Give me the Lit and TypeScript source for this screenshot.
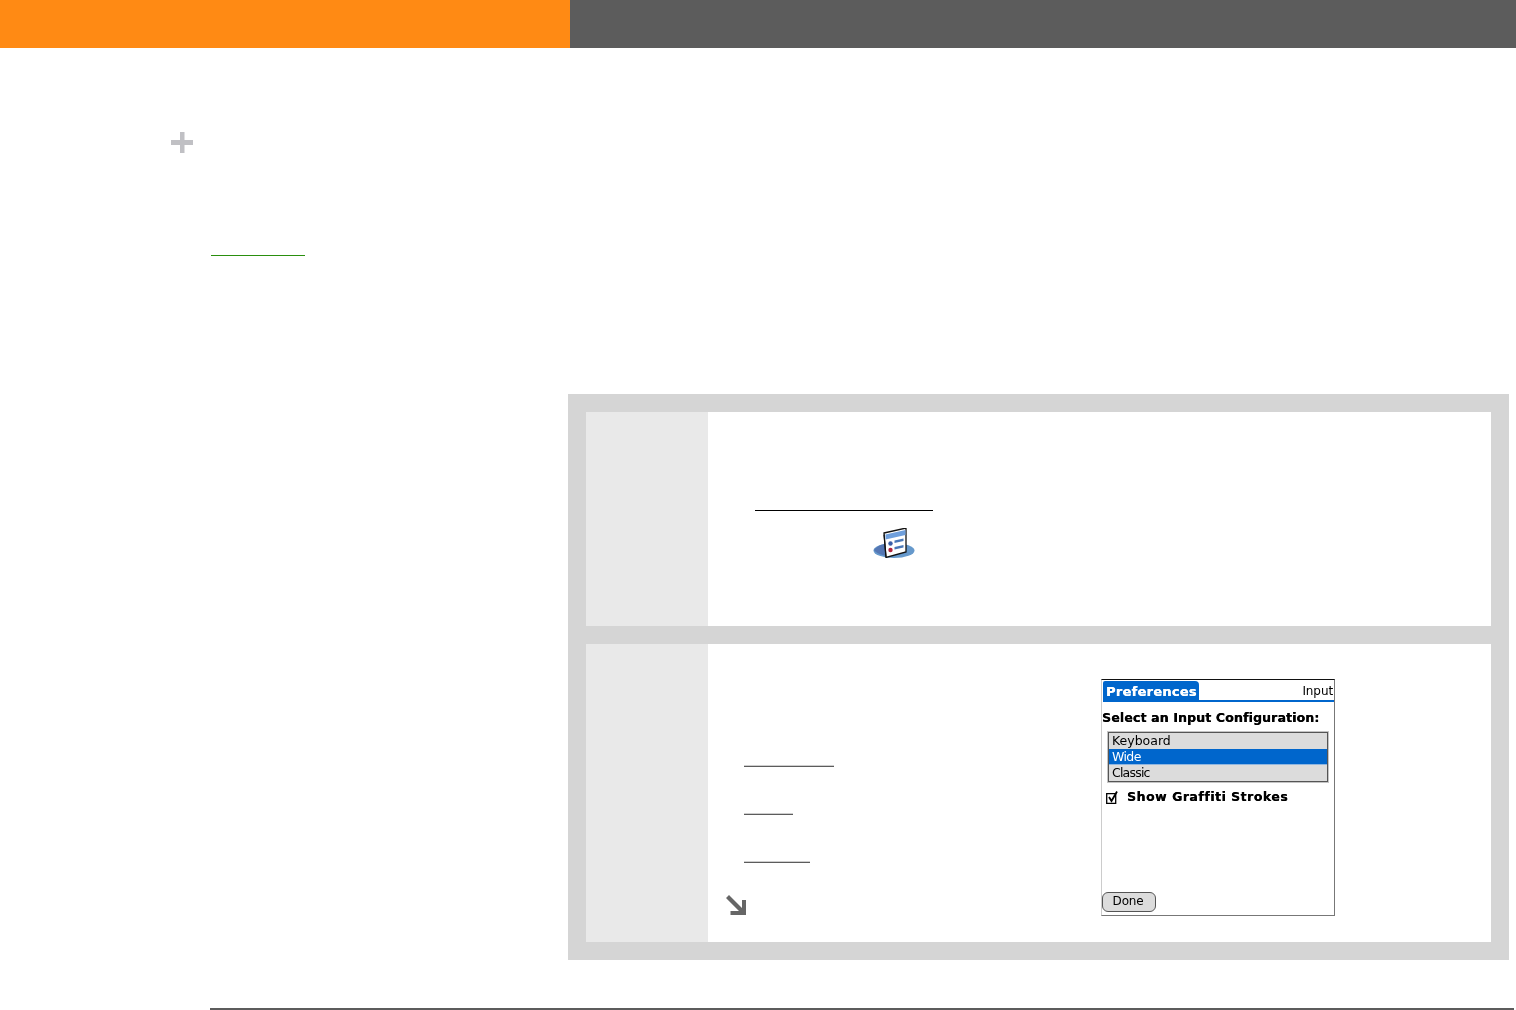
import { LitElement, html, css } from "lit";
import { customElement } from "lit/decorators.js";

@customElement("app-root")
export class AppRoot extends LitElement {
  static styles = css`
    :host { display: block; width: 1516px; height: 1010px; overflow: hidden; background: #fff; font-family: "DejaVu Sans", sans-serif; }
    .header { display: flex; height: 48px; }
    .header-accent { width: 570px; background: #ff8a14; }
    .header-bar { flex: 1; background: #5c5c5c; }
    .plus { display: block; margin: 84px 0 0 171px; }
    .crumb { width: 94px; height: 1px; margin: 102px 0 0 211px; background: #2a8f0e; }
    .panel { display: flex; flex-direction: column; gap: 18px; width: 905px; margin: 138px 0 0 568px; padding: 18px; background: #d5d5d5; }
    .row { display: flex; background: #fff; }
    .step { flex: 0 0 122px; background: #e9e9e9; }
    .first { flex: 1; height: 214px; padding-top: 98px; box-sizing: border-box; }
    .first .link { width: 178px; height: 1px; margin-left: 47px; background: #000; }
    .app-icon { display: block; margin: 17px 0 0 165px; }
    .second { flex: 1; display: flex; height: 298px; }
    .links { flex: 0 0 393px; padding-top: 122px; box-sizing: border-box; }
    .rule { height: 1px; margin-left: 36px; background: #5c5c5c; box-shadow: 0 -1px 0 rgba(92, 92, 92, 0.3); }
    .rule.a { width: 90px; }
    .rule.b { width: 49px; margin-top: 47px; }
    .rule.c { width: 66px; margin-top: 47px; }
    .more { display: block; margin: 32px 0 0 18px; }
    .screen { display: flex; flex-direction: column; box-sizing: border-box; width: 234px; height: 237px; margin-top: 35px; padding: 1px 0 3px 0; border-top: 1px solid #111; border-right: 1px solid #777; border-bottom: 1px solid #777; border-left: 1px solid #ccc; color: #000; font-size: 12.5px; line-height: 16px; filter: blur(0.3px); }
    .titlebar { display: flex; justify-content: space-between; align-items: flex-end; height: 19px; margin-left: 1px; border-bottom: 2px solid #0066cc; flex: none; }
    .tab { width: 96px; height: 19px; box-sizing: border-box; padding-left: 3px; background: #0066cc; color: #fff; font-weight: 700; font-size: 13px; line-height: 22px; letter-spacing: 0.25px; border-radius: 2px 4px 0 0; white-space: nowrap; text-shadow: 0.3px 0 0 currentColor; }
    .tab-right { padding-right: 1px; line-height: 17px; font-size: 12px; letter-spacing: -0.1px; }
    .prompt { margin-top: 8px; font-weight: 700; white-space: nowrap; letter-spacing: 0.15px; text-shadow: 0.3px 0 0 currentColor; }
    .list { margin: 6px 6px 0 6px; border: 1px solid #555; background: #dcdcdc; box-shadow: 0 0 0 1px rgba(85, 85, 85, 0.35); }
    .item { height: 16px; padding-left: 3px; font-size: 12.5px; line-height: 16px; }
    .item.sel { background: #0066cc; color: #fff; border-bottom: 1px solid #8fb6e0; height: 15px; letter-spacing: -0.6px; }
    .item.narrow { letter-spacing: -0.8px; }
    .check { display: flex; align-items: center; gap: 8px; margin: 7px 0 0 4px; font-weight: 700; white-space: nowrap; letter-spacing: 0.5px; text-shadow: 0.3px 0 0 currentColor; }
    .done { margin-top: auto; width: 54px; height: 20px; box-sizing: border-box; padding-right: 2px; border: 1px solid #555; border-radius: 6px; background: #dcdcdc; text-align: center; line-height: 17px; font-size: 12px; letter-spacing: -0.2px; }
    .foot { width: 1304px; height: 2px; margin: 48px 0 0 210px; background: #5c5c5c; }
  `;

  render() {
    return html`
      <div class="header"><div class="header-accent"></div><div class="header-bar"></div></div>
      <svg class="plus" width="22" height="21" viewBox="0 0 22 21"><path fill="#c0c0c4" d="M9 0h4.500v8H22v5h-8.500v8H9v-8H0V8h9z"/></svg>
      <div class="crumb"></div>
      <div class="panel">
        <div class="row">
          <div class="step"></div>
          <div class="first">
            <div class="link"></div>
            <svg class="app-icon" width="42" height="30" viewBox="0 0 42 30">
              <ellipse cx="21" cy="22.500" rx="20.500" ry="7.500" fill="#6699cc"/>
              <path d="M1 22c3-4 8-6 12-6l1 12C8 27 3 25 1 22z" fill="#5577b4"/>
              <path d="M11 5l22-5v24l-20 5.500z" fill="#fff" stroke="#111" stroke-width="1.300"/>
              <path d="M11.500 6l-1 1 2 22 1-1z" fill="#111"/>
              <path d="M12.500 6.500l20-4.500v5l-20 4.500z" fill="#6f9fdc"/>
              <circle cx="17.500" cy="15.500" r="2.200" fill="#3a5ea8"/>
              <circle cx="17.500" cy="22" r="2.200" fill="#b0243c"/>
              <path d="M21.500 12.500l9-2v2.500l-9 2zM21.500 19l9-2v2.500l-9 2z" fill="#4a78b8"/>
            </svg>
          </div>
        </div>
        <div class="row">
          <div class="step"></div>
          <div class="second">
            <div class="links">
              <div class="rule a"></div>
              <div class="rule b"></div>
              <div class="rule c"></div>
              <svg class="more" width="20" height="20" viewBox="0 0 20 20"><path fill="#666" d="M3 0l13 13V5h4v15H4.500v-4H13L0 3z"/></svg>
            </div>
            <div class="screen">
              <div class="titlebar"><div class="tab">Preferences</div><div class="tab-right">Input</div></div>
              <div class="prompt">Select an Input Configuration:</div>
              <div class="list">
                <div class="item">Keyboard</div>
                <div class="item sel">Wide</div>
                <div class="item narrow">Classic</div>
              </div>
              <div class="check">
                <svg width="13" height="13" viewBox="0 0 13 13"><path fill="none" stroke="#000" stroke-width="1.300" d="M.7 2.700h9v9.600h-9z"/><path fill="none" stroke="#000" stroke-width="1.800" d="M3 6l2.500 4L11 .5"/></svg>
                <span>Show Graffiti Strokes</span>
              </div>
              <div class="done">Done</div>
            </div>
          </div>
        </div>
      </div>
      <div class="foot"></div>
    `;
  }
}
